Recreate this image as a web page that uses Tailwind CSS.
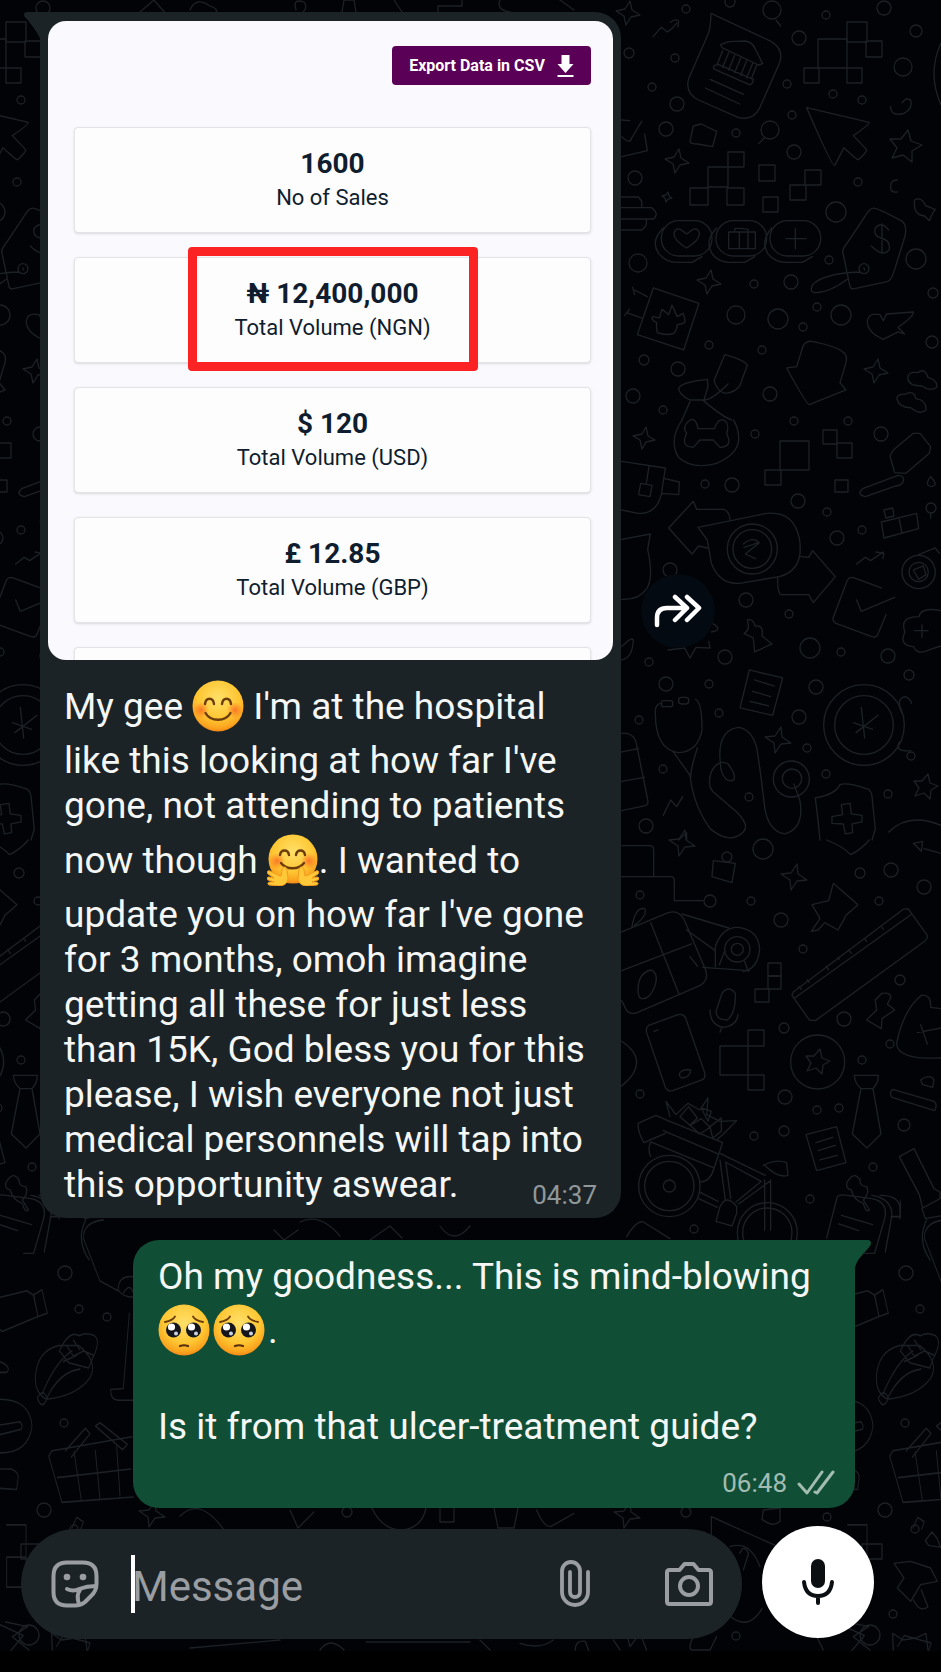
<!DOCTYPE html>
<html lang="en">
<head>
    <meta charset="UTF-8">
    <meta name="viewport" content="width=device-width, initial-scale=1.0">
    <title>Chat</title>
    <script src="https://cdn.jsdelivr.net/npm/@tailwindcss/browser@4"></script>
</head>
<body class="relative min-h-screen flex flex-col bg-[#010307] font-['Roboto',sans-serif] text-[#f5f7f7] overflow-x-hidden">
    <!-- Shared emoji artwork -->
    <svg class="absolute size-0" aria-hidden="true">
        <defs>
            <radialGradient id="face" cx=".5" cy=".35" r=".68">
                <stop offset="0" stop-color="#ffe069"/>
                <stop offset=".6" stop-color="#ffc632"/>
                <stop offset=".85" stop-color="#fba51f"/>
                <stop offset="1" stop-color="#ee7d14"/>
            </radialGradient>
            <radialGradient id="blush">
                <stop offset="0" stop-color="#f9561f" stop-opacity=".7"/>
                <stop offset="1" stop-color="#f9561f" stop-opacity="0"/>
            </radialGradient>
        </defs>
        <symbol id="smile" viewBox="0 0 52 52">
            <circle cx="26" cy="26" r="25.5" fill="url(#face)"/>
            <circle cx="9" cy="30" r="8" fill="url(#blush)"/>
            <circle cx="43" cy="30" r="8" fill="url(#blush)"/>
            <path d="M13 24c1-7 8-7 9 0M30 24c1-7 8-7 9 0" fill="none" stroke="#6b3d0c" stroke-width="2.4" stroke-linecap="round"/>
            <path d="M13.5 33c5 9 20 9 25 0" fill="none" stroke="#6b3d0c" stroke-width="2.4" stroke-linecap="round"/>
        </symbol>
        <symbol id="hug" viewBox="0 0 52 52">
            <circle cx="26" cy="25" r="24.5" fill="url(#face)"/>
            <circle cx="10" cy="27" r="8" fill="url(#blush)"/>
            <circle cx="42" cy="27" r="8" fill="url(#blush)"/>
            <path d="M13 21c1-6 8-6 9 0M29 21c1-6 8-6 9 0" fill="none" stroke="#6b3d0c" stroke-width="2.4" stroke-linecap="round"/>
            <path d="M14 29c5 7 18 7 23 0" fill="none" stroke="#6b3d0c" stroke-width="2.4" stroke-linecap="round"/>
            <g id="hand">
                <path d="M2 51c-2-1-1-3 1-3h4l-6-2c-2-1-1-3 1-3l5 1-6-4c-2-2 0-4 2-3l8 4 3 1 1-6c0-4 5-4 5 0l1 8c0 5-4 8-9 8z" fill="#ffc838" stroke="#f39a1e" stroke-width="1"/>
            </g>
            <use href="#hand" transform="translate(52 0) scale(-1 1)"/>
        </symbol>
        <symbol id="plead" viewBox="0 0 52 52">
            <circle cx="26" cy="26" r="25.5" fill="url(#face)"/>
            <path d="M7 18c5-1 8-2 10-5.500M45 18c-5-1-8-2-10-5.500" fill="none" stroke="#6b3d0c" stroke-width="1.8" stroke-linecap="round"/>
            <circle cx="15.5" cy="26" r="7.5" fill="#14161c"/>
            <circle cx="35.5" cy="26" r="7.5" fill="#14161c"/>
            <circle cx="13.5" cy="23" r="3.6" fill="#fff"/>
            <circle cx="33.5" cy="23" r="3.6" fill="#fff"/>
            <circle cx="18" cy="29.5" r="2" fill="#c9d4e4"/>
            <circle cx="38" cy="29.5" r="2" fill="#c9d4e4"/>
            <path d="M22 42q4-1.500 8 0" fill="none" stroke="#5a2f10" stroke-width="2.2" stroke-linecap="round"/>
        </symbol>
    </svg>

    <!-- Wallpaper, repeats every 841px -->
    <div class="absolute inset-0 bottom-[21px] overflow-hidden" aria-hidden="true">
        <svg width="1800" height="1672" class="block max-w-none fill-none stroke-[#1d2125]" stroke-width="1.3" stroke-linejoin="round" stroke-linecap="round">
            <g id="tile">
                <g id="dots"></g>
                <g transform="translate(620 0) scale(.3333)" stroke-width="4">
                    <path d="M99 110l25-28 18 14 14 -10 14-16M152 67q12-12 24-4l-2 18"/>
                    <path d="M273 40l180 84q38 22 27 62l-62 140q-20 38-64 26l-118-52q-42-20-30-64l60-138q6-16 7-58z"/>
                    <path d="M302 134l24-9 50-2q22 4 30 24l22 44-12 4-110-52zM308 152l-16 40M326 158l-18 44M344 166l-18 44M362 174l-18 44M380 182l-18 44M398 190l-18 44M410 196l-16 40M284 196q-8 8 0 12l104 46q10 0 12-16l-104-44zM270 238l101 45M256 264l103 48"/>
                    <path d="M560 323l188 44q2 6-48 40l40 42q2 6-24 30-6 0-44-36l-28 54q-8 2-84-174z"/>
                    <path d="M220 378l24-6 46 22-12 46-46-8q-20 0-22-8z"/>
                    <path d="M416 431l18-18M468 60l14 18M5 360l24 2M5 410q25 25 30 4l30-50M74 402l8 50-77 18M5 591h50l10 12v20M5 623h90q24 18 6 34H5M5 690h60q18-12 14-30"/>
                    <path d="M812 320q0 30 40 20 28-14 20-40l-14-4-12 12M832 540q-26 0-18 32 8 6 18 4M884 600q20-12 34 18l28 10-6 8-12 26-14-14q-36-4-30-48z"/>
                    <rect x="124" y="662" width="152" height="106" rx="52"/><rect x="288" y="662" width="152" height="106" rx="52"/><rect x="450" y="662" width="152" height="106" rx="52"/>
                    <path d="M130 684q-40 40-14 76 20 28 60 27h40l30-17M290 684q-40 40-10 82 20 22 50 21h44l30-17M455 684q-34 40-12 76 20 28 60 27h44l30-17"/>
                    <path d="M200 744q-40-24-38-44 8-24 30-4l8 6 8-6q24-20 30 4 2 20-38 44zM326 696h80v50h-80zM344 696v-8q2-6 40 0v8M358 696v50M384 696v50M498 716h60M526 686v60"/>
                    <path d="M758 625q10-4 90 40 12 10 8 40l-34 110q-8 26-20 30l-102 22q-8 0-10-8l-22-104q0-10 18-32l60-90q6-8 12-8z"/>
                    <path d="M806 690q-20-28-40-6-6 24 16 30 30 6 26 34-18 26-54-10M786 672v88M732 806m-15 0a15 15 0 1 0 30 0a15 15 0 1 0-30 0M732 804l2 6M720 816q-110 4-142 38-12 24 10 24 40 0 94-40"/>
                    <path d="M100 864l137 46-46 140-139-46zM38 862l6 22M44 870l38 20M14 946l14-18M20 938l44 16"/>
                    <path d="M110 968q-20-10-12-18l20 4 8-26 20 16 10-28 16 34 18-10 4 16q8 16-22 18 0 12-10 26-24 8-50-2-4-18-2-30z"/>
                    <path d="M742 964q4-28 38-20l10 18 10-20 80-6q2 14-46 46l20 20-20-6-44 22q-48-20-48-54z"/>
                    <path d="M550 1036q10-14 26-12 70 14 90 30 18 10 12 34l-18 60 18 22-110 44q-8 0-68-110l30-4z"/>
                    <path d="M314 1064q60 16 68 32l-22 60q-14 22-46 24-22-6-32-38zM324 1152q-50 50-74 48M176 1164q10-18 86-26l2 22-12 40h-42q-34-16-34-36zM210 1205l-24 55M250 1202q60 50 85 58"/>
                    <path d="M864 1136q-4-22 30-18 20-16 30 14 30 8 26 30-20 14-44-4-40 0-42-22zM832 1200q-6-18 26-18 24-12 30 14 32 4 30 34-18 16-44-6-36-2-42-24zM963 130q-42 90 0 184"/>
                </g>
                <g transform="translate(620 420) scale(.3333)" stroke-width="4">
                    <path d="M186 0q-40 60-12 110 40 40 116 20 70-30 66-80-2-30-16-50M210 0q-26 20-10 40-20 40 20 42l20-22h40l20 22q40-2 20-40 10-30-8-42-20-4-28 26l-50 0q-6-34-24-26z"/>
                    <path d="M5 124l131 20-12 80q-16 60-70 56l-49-10M87 138l-8 52M62 190l34 6-6 34-34-6zM134 176l44 10-2 38-52-4"/>
                    <path d="M330 298q-4-28-20-30h-80l-10-24-74 80 70 78 20-24 26 6"/>
                    <path d="M234 322l206-42q80-8 98 74 16 96-60 116l-120 20q-60 4-84-60l-12-70z"/>
                    <circle cx="397" cy="387" r="75"/><circle cx="397" cy="387" r="58"/>
                    <path d="M370 372q30-24 46-4l-44 14M418 368l-42 34 30 14"/>
                    <path d="M542 410l24 2 12-20 68 78-66 78-14-24h-82q-12-4-11-54"/>
                    <path d="M5 358l86-16-8 46q20 90-6 122-20 30-72 28"/>
                    <path d="M820 90l60-50 20 0 32 40-4 20-70 60-34-2-14-50zM728 206l106-40q20 0 16 18-6 12-22 14l-92 32q-18-4-16-14zM784 306l106-26 6 46-104 28zM838 298l8 40M792 270l26-6 4 24-24 6zM932 170q-20 26 2 30 24-4-2-30M932 280v14"/>
                    <path d="M710 432l26-20 16 10 38-26M768 396l24 4-4 16"/>
                    <circle cx="896" cy="456" r="50"/><circle cx="896" cy="456" r="29"/>
                    <path d="M880 450l30-12 8 26-22 14zM896 404l50-20 12 16"/>
                    <path d="M784 504l-86-32q-14 0-18 14l-40 106q-4 12 8 18l108 40q14 4 18-8l24-58M710 540l14 34 100-42"/>
                    <path d="M963 572q-60-12-66 18-60 0-42 46-20 40 26 44 10 28 50 8l32-10M884 632h40M906 614v38"/>
                    <path d="M382 600q16-6 24 18 26-4 20 30l30 24-52 24-4-42-28-14q20-10 10-40zM144 690l50-6 16 30 18-32 42 2-4-20M276 610q24 10 14 22l-16 4M5 680q40-40 34-10-4 44-34 50"/>
                    <path d="M388 750l100 24-30 112-98-22zM404 780l58 18M398 814l54 16M390 844l56 14"/>
                    <circle cx="732" cy="915" r="121"/><circle cx="732" cy="915" r="88"/>
                    <path d="M724 862l10 92M774 886l-66 52M700 908l58 20M846 880q-20-44 10-50 20 10 18 20M838 966q-16 30 34 26"/>
                    <path d="M126 850q-22 0-20 30 0 110 70 118 60-4 70-70 0-84-20-90M160 996l50 70q10 90 60 160 60 50 100 10 20-20-20-60l-70-60q-20-20-6-60 20-40 50-24 30 40 14 50-24 4-34-30-20-120 50-130 40 4 56 60 10 60 24 180 10 70 60 80 60-16 46-100l-18-50M232 984q-20 60-20 90"/>
                    <rect x="124" y="842" width="34" height="18" rx="6"/><rect x="176" y="832" width="30" height="20" rx="8"/>
                    <circle cx="514" cy="1077" r="54"/><circle cx="516" cy="1076" r="29"/>
                    <path d="M586 1134q60-10 74-40 20-8 86 14 8 8 10 20l10 100-10 32M586 1134q8 60 14 126M664 1154l26-4 4 32 32 4v20l-30 6 2 26-22 4-6-30-34-2v-20l32-6zM806 1236q60-60 157-20"/>
                    <path d="M5 940q40-4 46 40l32 160q4 14-10 18l-68 14M5 996l50-10M5 1084l68-12M130 1186l22-46 18 20 18-30M176 1260l24-22v22"/>
                </g>
                <g transform="translate(620 840) scale(.3333)" stroke-width="4">
                    <path d="M5 17h84q12 0 12 14v76M5 110h148q10 0 10 12v60h86M280 62l66 8-10 58-60-18zM620 0q50 20 72 44 30-14 56-44M880 10l28-6-4 30zM912 26l51 14"/>
                    <path d="M640 130l74 64-36 32-8 16-16 28-40-22-20 22-20 4 26-38-10-18-14-24 50-12z"/>
                    <path d="M864 206l58 80q2 10-8 18L586 542l-18-2-52-74 4-10L850 208zM524 474L876 222"/>
                    <path d="M536 440l8 8M562 420l6 8M618 378l8 12M654 352l4 6M686 330l8 10M734 296l6 8M786 262l4 6"/>
                    <path d="M5 276l140-58q30-10 48 22l64 150q10 30-16 46L46 520q-20 2-28-12l-13-26M92 248l86 216M5 392l210-80M186 222l140 42M200 270l86 62M248 382l140 10M54 450q0-50 38-60 26 10 12 50-16 40-40 36-10-4-10-26zM210 350l22 28M36 260q10-60 38-54 10 20-30 50"/>
                    <path d="M286 380v-60q20-60 70-58 60 8 63 66-6 60-50 66M298 374l16-40M384 394l-10-30"/>
                    <circle cx="352" cy="328" r="38"/><circle cx="352" cy="328" r="18"/>
                    <path d="M306 460q20-26 40 0 2 60-24 80-34 0-34-26zM270 510q0 46 40 52 40-4 44-38M306 562l-6 14"/>
                    <path d="M86 556l88-32q14-4 22 8l58 166q4 16-8 22l-88 32q-14 4-22-10L80 578q-4-14 6-22zM102 574l12-4M178 702q6-16 34-12 0 20-24 24-10-2-10-12zM5 604q90 60 0 134"/>
                    <circle cx="593" cy="666" r="81"/>
                    <path d="M703 706h72q0 24-16 40h-36q-18-14-20-40zM723 746l-26 136 44 42 42-42-24-136"/>
                    <path d="M740 540l30-30-4-30 20-20q30-4 26 14l-10 18 22 18-38 26-2 30zM830 610q20-100 74-144 30-4 28 36l31 4M830 610q0 50 133 44M892 578l71-14M902 554l20 58"/>
                    <path d="M818 748l124 36q12 10 2 28l-128-40q-10-12 2-24zM902 720q30-20 40 0l-4 22-30-8z"/>
                    <path d="M558 884l92-24 28 108-88 24zM588 908l50-16M594 932l52-16M600 960l52-14"/>
                    <path d="M54 850l54-24 30 14M54 850q0 30 18 58l64-28M138 840l170 68-26 76L92 906M92 906q-10 20 0 44M130 872l164 70M150 830l-12-46 30 40 36-34 36 20 24-36-4 50 40 20 50 -2-40 40-20 18"/>
                    <path d="M180 830l26-30 26 34-22 22zM210 856l34-20 26 26-30 20zM244 804l30 10-10 30zM270 860l34-26v40l-26 20z"/>
                    <circle cx="148" cy="1038" r="92"/><circle cx="148" cy="1038" r="74"/><circle cx="148" cy="1038" r="18"/>
                    <circle cx="442" cy="1178" r="90"/><circle cx="442" cy="1178" r="74"/>
                    <path d="M300 960l16 120M318 970l14 106M300 940l136 66M316 966l108 58-76 62M356 1092l96-70M434 1020v150M452 1020v150M238 1056l56 28M236 1076l56 26M282 984q-10 40-40 42M430 976q40-20 70-8l4 38q-30 10-70-30zM300 1100q20-40 50 0v20l-14 38-48-14z"/>
                    <path d="M652 1070q8-8 30-4l74 10q50 10 38 60l-30 104h-30M652 1070l-32 124M664 1126l94 28M656 1152l60 20M756 1066q60 10 60 60l-20 110M780 1066q60 0 60 40v30M680 1030q20-40 40-10 0 20 20 20 10 20-10 40l18 30q-10 10-18-20-30-10-36-40-16-4-14-20z"/>
                    <path d="M838 950l44-24 60 120 18 10v20l-52 28-10-40zM906 1106l10 30 46-8M920 1140q-30 60 10 120M20 1190q30-50 50-44l80 50"/>
                </g>
                <!-- lower part of the tile -->
                <g transform="translate(841 830) scale(.3333 .537)" stroke-width="3">
                    <path d="M150 720h28v-30M250 760q0-30 60-34M250 760l50 80 54 18M354 858q0-30 46-26M400 870q-30 0-44-12M370 862q20-20 30 0"/>
                    <path d="M0 870q30-4 80-12l20 8 26-10 16 44-28 6-12-38M100 866l14 40L6 934 0 930M0 990q36 10 20 20H0M0 1060q90 0 96 50-10 50-96 50M0 1108l60-6q10 8 4 14L0 1126M0 1190h34q24 6 20 18l-4 20-50-2"/>
                    <path d="M106 1020q4-50 70-60l60 0q60 30 34 60-40 34-130 40-34-10-34-40zM126 1050q40-60 90-80M140 1058q40-50 100-54M112 1058q16-20 30 0-16 24-30 0M178 970q30-40 60-28 20-8 46 0 20 10-8 44l-10 16-60-10zM200 960l20 20 30-10 30 8M190 990l40-12M220 950l20 18"/>
                    <path d="M146 1166l10-10 240-26M146 1166l40 86 214-10M172 1206l220-16M222 1158l22 90M286 1156l14 90M350 1148l10 92M196 1156l60-42 14 10-56 44M286 1110l14-6 82 40-14 10zM388 900l-18 140-38 2q0 20 22 20h46"/>
                    <path d="M20 1294h58v60H20M20 1354v56h58v-56M216 1300l14-20 20 8-8 14M0 1480l70 20-40 30M170 1520l20-20 80 14-10 20"/>
                </g>
                <g transform="translate(520 1500) scale(.3333)" stroke-width="4">
                    <path d="M50 30q20 50 42 50l70-40M574 50l200 90M574 50v60M630 140q60-20 90 60M660 160q10-30 26 0l-16 50M626 346q60 50 100-20M1122 190l50-6 60 20 20 40-50 10-30 50-40-40 20-30zM1180 300q20 40 44 20l-20-50M1120 450l-2-50 30 20 40 -6 30-14 6 50M1000 410l46-30-66-14M1000 410l50 40M890 410l20 40M1216 122l20-26 16 20 10 26-36-6zM730 30l50-6v40q-20 20-54-6zM0 430q60 20 100-10M166 450q0-30 30-26l10 28M280 420l20 30M320 400l10 40 30-40 20 50M520 410q-20 40 0 40h50l20-40"/>
                </g>
            </g>
            <use href="#tile" x="-841"/>
            <!-- doodles peeking out above the first bubble and between the rows -->
            <path d="M140 12l14-12 12 14M190 10q6-14 20-4 12 4 2 10M296 10q-4-12 8-8 4 6-1 10M342 12l2-12h10l2 12M394 0l8 12M438 12V6h24V0M500 0q-4 10 10 12M560 0l14 10M274 1230l10 10 14-10M300 1222q20-10 40 14M370 1240l20-14 12 12M440 1226q14 20 30 0M180 1516q20-20 44 14M290 1510l8 18 16-16M372 1508q10 22 30 22 20-2 24-22M440 1508v14h14v-14M494 1508l4 20 16 0 4-20M190 1648l90-8M320 1650q10-14 24 0M366 1642h104M480 1640l10 10"/>
        </svg>
    </div>

    <main class="relative flex-1 flex flex-col gap-[22px] pt-3 pl-10 pr-[86px]">
        <!-- Incoming message -->
        <div class="flex items-center gap-5 -mr-4">
            <article class="relative w-full max-w-[581px] bg-[#1b2326] rounded-[26px] rounded-tl-none px-2 pt-[9px] pb-2">
                <svg class="absolute -left-4 top-0 w-[18px] h-7 fill-[#1b2326]" viewBox="0 0 18 28" aria-hidden="true">
                    <path d="M18 0H3C0 0-1 3 1 5c6 7 11 13 16 23h1z"/>
                </svg>
                <section class="h-[639px] overflow-hidden bg-[#f9f9fe] rounded-[18px] pl-[26px] pr-[22px] pt-[25px] text-[#0f1d2f] flex flex-col">
                    <button class="self-end shrink-0 w-[199px] h-[39px] bg-[#5b0057] rounded-[4px] text-white font-bold text-base flex items-center justify-center gap-3">
                        <span>Export Data in CSV</span>
                        <svg class="w-[17px] h-[22px] fill-white" viewBox="0 0 16 22" aria-hidden="true"><path d="M4 0h8v9h4l-8 9-8-9h4zM0 20h16v2H0z"/></svg>
                    </button>
                    <div class="mt-[42px] flex flex-col gap-6">
                        <div class="h-[106px] shrink-0 bg-[#fdfdfd] border border-[#e3e3e7] rounded-[4px] shadow-sm pt-5 text-center">
                            <p class="text-[28px] leading-8 font-bold">1600</p>
                            <p class="text-[22px] leading-9">No of Sales</p>
                        </div>
                        <div class="relative h-[106px] shrink-0 bg-[#fdfdfd] border border-[#e3e3e7] rounded-[4px] shadow-sm pt-5 text-center">
                            <p class="text-[28px] leading-8 font-bold">₦ 12,400,000</p>
                            <p class="text-[22px] leading-9">Total Volume (NGN)</p>
                            <span class="absolute left-1/2 -translate-x-1/2 -top-[11px] w-[290px] h-[124px] border-[9px] border-[#fb2323] rounded-[4px]"></span>
                        </div>
                        <div class="h-[106px] shrink-0 bg-[#fdfdfd] border border-[#e3e3e7] rounded-[4px] shadow-sm pt-5 text-center">
                            <p class="text-[28px] leading-8 font-bold">$ 120</p>
                            <p class="text-[22px] leading-9">Total Volume (USD)</p>
                        </div>
                        <div class="h-[106px] shrink-0 bg-[#fdfdfd] border border-[#e3e3e7] rounded-[4px] shadow-sm pt-5 text-center">
                            <p class="text-[28px] leading-8 font-bold">£ 12.85</p>
                            <p class="text-[22px] leading-9">Total Volume (GBP)</p>
                        </div>
                        <div class="h-[106px] shrink-0 bg-[#fdfdfd] border border-[#e3e3e7] rounded-[4px] shadow-sm"></div>
                    </div>
                </section>
                <p class="flow-root pt-[14px] px-4 text-[37px] leading-[45px]">My gee <svg role="img" aria-label="Smiling face" class="inline-block size-[52px] align-[-19px] mt-[6px] mb-[6px]"><use href="#smile"/></svg> I'm at the hospital like this looking at how far I've gone, not attending to patients now though <svg role="img" aria-label="Hugging face" class="inline-block size-[52px] align-[-19px] mt-[6px] mb-[6px]"><use href="#hug"/></svg>. I wanted to update you on how far I've gone for 3 months, omoh imagine getting all these for just less than 15K, God bless you for this please, I wish everyone not just medical personnels will tap into this opportunity aswear. <time class="float-right text-[26px] leading-[30px] mt-[18px] text-[#90979a]">04:37</time></p>
            </article>
            <button aria-label="Forward" class="shrink-0 size-[74px] mb-2 rounded-full bg-[#040a11] flex items-center justify-center">
                <svg class="w-12 h-9 fill-none stroke-white" viewBox="0 0 48 36" stroke-width="4.5" stroke-linecap="round" stroke-linejoin="round"><path d="M3 32V25Q3 15 13 15H33M21 4l12 11-12 12M33 4l12 11-12 12"/></svg>
            </button>
        </div>

        <!-- Outgoing message -->
        <article class="relative self-end w-full max-w-[722px] bg-[#104f36] rounded-[26px] rounded-tr-none pl-[25px] pr-5 pt-[14px] pb-[10px]">
            <svg class="absolute -right-4 top-0 w-[17px] h-7 fill-[#104f36]" viewBox="0 0 17 28" aria-hidden="true">
                <path d="M0 0h14c3 0 4 3 2 6C11 13 3 18 1 28H0z"/>
            </svg>
            <p class="text-[37px] leading-[45px]">Oh my goodness... This is mind-blowing <span class="whitespace-nowrap"><svg role="img" aria-label="Pleading face" class="inline-block size-[52px] align-[-16px] mt-[5px] mb-[3px] mr-[3px]"><use href="#plead"/></svg><svg role="img" aria-label="Pleading face" class="inline-block size-[52px] align-[-16px] mt-[5px] mb-[3px] mr-[3px]"><use href="#plead"/></svg>.</span><br><br>Is it from that ulcer-treatment guide?</p>
            <div class="mt-[19px] flex justify-end items-center gap-[10px] text-[26px] leading-[30px] text-[#a3bcb1]">
                <time>06:48</time>
                <svg class="w-[38px] h-[26px] fill-none stroke-[#a3bcb1]" viewBox="0 0 38 26" stroke-width="3" stroke-linecap="round" stroke-linejoin="round"><path d="M2 14l8 9L25 2M18 22l2 1L36 2"/></svg>
            </div>
        </article>
    </main>

    <!-- Composer -->
    <form class="relative flex items-center gap-5 pl-[21px] pr-[67px] pt-[17px] pb-3">
        <div class="flex-1 min-w-0 h-[110px] mt-1 rounded-full bg-[#1b2326] flex items-center pl-[30px] pr-[29px] text-[#9a9ea2]">
            <button type="button" aria-label="Stickers" class="shrink-0">
                <svg class="block size-12 fill-none stroke-current" viewBox="0 0 48 48" stroke-width="4" stroke-linecap="round" stroke-linejoin="round">
                    <path d="M16 2.500h16Q45.500 2.500 45.500 16v8Q45.500 31 40 36l-6 6q-4 3.500-10 3.500h-8Q2.500 45.500 2.500 32V16Q2.500 2.500 16 2.500z"/>
                    <path d="M16 29q6 3 12 0 8-3 17-3M29 30q-4 5-1 14"/>
                    <circle cx="16" cy="17" r="3.3" fill="currentColor" stroke="none"/><circle cx="32" cy="17" r="3.3" fill="currentColor" stroke="none"/>
                </svg>
            </button>
            <div class="relative flex-1 min-w-0 ml-8">
                <input type="text" aria-label="Message" placeholder="Message" class="block w-full h-[58px] pl-px pt-1 text-[42px] text-white placeholder:text-[#9a9ea2] outline-none">
                <span class="absolute left-0 top-0 w-1 h-[58px] bg-white"></span>
            </div>
            <button type="button" aria-label="Attach" class="shrink-0">
                <svg class="block w-[30px] h-12 fill-none stroke-current" viewBox="0 0 30 48" stroke-width="3.8" stroke-linecap="round"><path d="M28 12v20a13 13 0 0 1-26 0V11a9 9 0 0 1 18 0v21a5 5 0 0 1-10 0V12"/></svg>
            </button>
            <button type="button" aria-label="Camera" class="shrink-0 ml-[75px]">
                <svg class="block w-12 h-11 fill-none stroke-current" viewBox="0 0 48 44" stroke-width="4" stroke-linejoin="round"><path d="M4.500 8h10l5-6h9l5 6h10q2.500 0 2.500 2.500v29q0 2.500-2.500 2.500h-39Q2 42 2 39.500v-29Q2 8 4.500 8z"/><circle cx="24" cy="24" r="9"/></svg>
            </button>
        </div>
        <button type="button" aria-label="Record voice message" class="shrink-0 size-28 rounded-full bg-white flex items-center justify-center">
            <svg class="w-[34px] h-[46px] fill-none stroke-[#0b0f12]" viewBox="0 0 34 46" stroke-width="4" stroke-linecap="round"><rect x="10" y="0" width="14" height="29" rx="7" fill="#0b0f12" stroke="none"/><path d="M3 23c1 9 6 14 14 14s13-5 14-14M17 37v7"/></svg>
        </button>
    </form>
    <div class="relative h-[21px] bg-black"></div>

    <script>
        const circles = [
            [686,9,4],[730,2,5],[772,10,9],[826,15,4],[884,8,7],[799,38,7],[675,58,4],[916,31,6],[629,53,5],[903,67,9],[652,87,4],[677,104,7],
            [787,84,4],[833,94,4],[862,100,4],[792,115,4],[666,129,7],[736,133,4],[770,130,9],[794,152,7],[635,178,7],[858,182,4],[836,212,10],
            [638,263,9],[916,259,10],[829,260,4],[754,284,4],[791,282,7],[736,315,9],[778,319,10],[817,307,4],[841,315,10],[803,327,4],[709,345,4],
            [762,350,4],[644,360,5],[678,369,7],[770,394,7],[633,396,7],[663,410,4],[932,342,6],[933,293,5],[755,434,4],[794,421,4],[848,421,4],
            [881,434,7],[705,484,4],[732,485,7],[798,501,7],[827,512,4],[837,538,7],[862,530,4],[931,508,5],[670,570,7],[746,600,7],[789,614,4],
            [810,648,10],[841,652,4],[888,656,7],[725,657,7],[649,662,4],[816,687,7],[709,684,4],[666,684,7],[719,713,4],[799,717,7],[909,675,5],
            [639,720,4],[807,748,4],[826,774,4],[663,769,4],[749,797,4],[888,794,4],[646,826,7],[911,756,4],[763,849,10],[727,857,5],[860,873,5],
            [924,887,7],[891,870,7],[640,895,4],[710,901,6],[751,901,4],[879,901,4],[781,920,7],[803,949,4],[900,980,5],[844,1019,7],[784,1028,5],
            [890,1044,4],[862,1060,4],[640,1094,4],[785,1097,7],[817,1110,4],[839,1108,4],[904,1125,6],[754,1136,4],[784,1131,5],[873,1167,4],
            [810,1199,4],[694,1229,4],[906,1273,7],[920,1309,4],[948,1317,4],[905,1423,4],[885,1510,7],[686,1512,5],[827,1517,4],[736,1636,4],
            [870,1635,10],[893,1614,4],[915,1529,4],[347,1512,5]
        ];
        const squares = [
            [847,22,20,20],[818,39,29,29],[866,41,16,16],[804,68,15,15],[847,68,15,15],[728,152,16,15],[708,167,20,20],[690,188,18,17],
            [727,188,17,17],[759,165,16,16],[805,170,16,15],[790,185,16,15],[763,197,15,15],[823,430,14,14],[837,443,15,15],[780,441,29,29],
            [765,470,16,15],[835,480,13,12],[768,963,13,13],[768,976,13,13],[755,989,14,13],[748,1030,16,16],[720,1046,28,29],[748,1075,16,15],
            [862,1544,20,15]
        ];
        const sparkles = [
            [677,161,12],[709,282,12],[876,371,12],[628,13,12],[667,197,5],[644,438,11],[778,740,13],[794,877,13],[682,843,13],[627,1515,13],[152,1514,13]
        ];
        const stars = [[905,147,17],[925,787,13],[817,1062,13]];

        function star([x, y, r], points, inner) {
            let d = '';
            for (let i = 0; i < points * 2; i++) {
                const a = i * Math.PI / points - Math.PI / 2 + 0.2;
                const k = i % 2 ? r * inner : r;
                d += (i ? 'L' : 'M') + Math.round(x + k * Math.cos(a)) + ' ' + Math.round(y + k * Math.sin(a));
            }
            return `<path d="${d}Z"/>`;
        }

        document.getElementById('dots').innerHTML =
            circles.map(([x, y, r]) => `<circle cx="${x}" cy="${y}" r="${r}"/>`).join('') +
            squares.map(([x, y, w, h]) => `<rect x="${x}" y="${y}" width="${w}" height="${h}"/>`).join('') +
            sparkles.map(s => star(s, 4, 0.4)).join('') +
            stars.map(s => star(s, 5, 0.5)).join('');
    </script>
</body>
</html>
